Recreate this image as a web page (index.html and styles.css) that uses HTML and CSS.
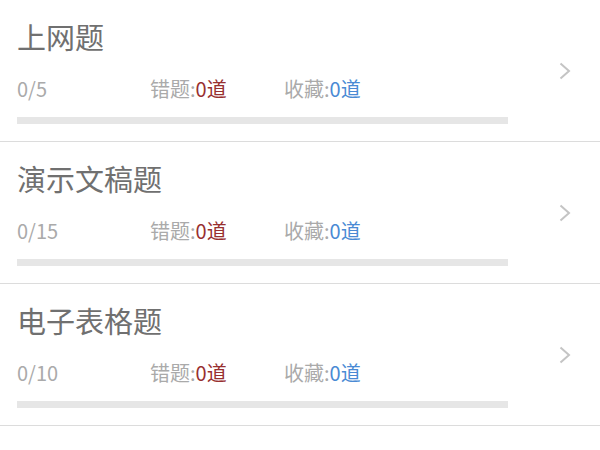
FILE: index.html
```html
<!DOCTYPE html>
<html lang="zh">
<head>
<meta charset="utf-8">
<link rel="stylesheet" href="styles.css">
</head>
<body>
<div class="list">
  <div class="item">
    <div class="main">
      <div class="title">上网题</div>
      <div class="stats">
        <span class="count">0/5</span>
        <span class="stat">错题:<em class="red">0道</em></span>
        <span class="stat">收藏:<em class="blue">0道</em></span>
      </div>
      <div class="bar"></div>
    </div>
    <svg class="chev" width="12" height="18" viewBox="0 0 12 18"><polyline points="1.5,1.5 10,9 1.5,16.5" fill="none" stroke="#c4c4c4" stroke-width="2"/></svg>
  </div>
  <div class="item">
    <div class="main">
      <div class="title">演示文稿题</div>
      <div class="stats">
        <span class="count">0/15</span>
        <span class="stat">错题:<em class="red">0道</em></span>
        <span class="stat">收藏:<em class="blue">0道</em></span>
      </div>
      <div class="bar"></div>
    </div>
    <svg class="chev" width="12" height="18" viewBox="0 0 12 18"><polyline points="1.5,1.5 10,9 1.5,16.5" fill="none" stroke="#c4c4c4" stroke-width="2"/></svg>
  </div>
  <div class="item">
    <div class="main">
      <div class="title">电子表格题</div>
      <div class="stats">
        <span class="count">0/10</span>
        <span class="stat">错题:<em class="red">0道</em></span>
        <span class="stat">收藏:<em class="blue">0道</em></span>
      </div>
      <div class="bar"></div>
    </div>
    <svg class="chev" width="12" height="18" viewBox="0 0 12 18"><polyline points="1.5,1.5 10,9 1.5,16.5" fill="none" stroke="#c4c4c4" stroke-width="2"/></svg>
  </div>
</div>
</body>
</html>
```
FILE: styles.css
```css
html, body {
  margin: 0;
  padding: 0;
  background: #fff;
}
body {
  font-family: "Noto Sans CJK SC", "Noto Sans", sans-serif;
}
.item {
  display: flex;
  align-items: center;
  border-bottom: 1px solid #dcdcdc;
  padding: 22px 0 17px 17px;
}
.main {
  flex: 0 0 491px;
}
.title {
  font-size: 29px;
  line-height: 29px;
  color: #707070;
}
.stats {
  display: flex;
  margin-top: 28px;
  font-size: 20px;
  line-height: 20px;
  color: #aaaaaa;
}
.count {
  width: 133px;
}
.stat {
  width: 134px;
}
.stat em {
  font-style: normal;
}
.red {
  color: #983030;
}
.blue {
  color: #4a8ad4;
}
.bar {
  margin-top: 18px;
  height: 7px;
  background: #e6e6e6;
}
.chev {
  margin-left: 51px;
  margin-bottom: 5px;
}
```
